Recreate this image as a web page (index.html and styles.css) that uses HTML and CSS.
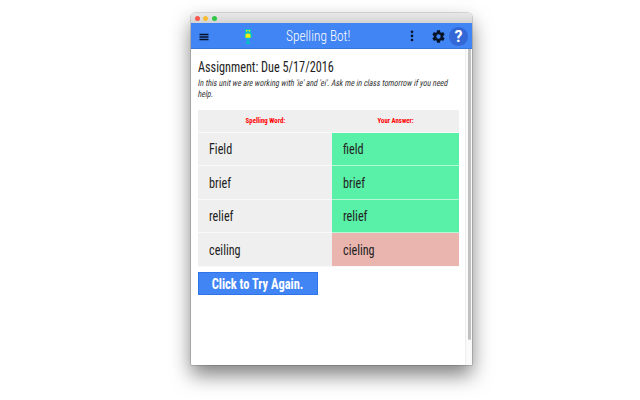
FILE: index.html
```html
<!DOCTYPE html>
<html lang="en">
<head>
<meta charset="utf-8">
<title>Spelling Bot!</title>
<link rel="stylesheet" href="styles.css">
</head>
<body>
<main class="window">
  <div class="titlebar"><i class="dot red"></i><i class="dot yellow"></i><i class="dot green"></i></div>
  <header class="toolbar">
    <svg class="menu" width="10" height="8" viewBox="0 0 10 8"><path d="M.5 1.5h9M.5 4h9M.5 6.5h9" stroke="#071326" stroke-width="1.3"/></svg>
    <svg class="bot" width="8" height="16" viewBox="0 0 8 16"><path fill="#05bfc8" d="M1 0h6v4h1v5H6v1H5v3h1v2H2v-2h1v-3H2V9H0.500V4H1z"/><path fill="#f6ee10" d="M2 1h1.400v1.500H2zM4.600 1H6v1.500H4.600zM2.500 4.500h3L6.500 6v2.800h-5V6z"/></svg>
    <h1 class="title"><span class="t">Spelling Bot!</span></h1>
    <svg class="more" width="4" height="12" viewBox="0 0 4 12"><g fill="#071326"><circle cx="2" cy="1.800" r="1.350"/><circle cx="2" cy="5.900" r="1.350"/><circle cx="2" cy="10" r="1.350"/></g></svg>
    <svg class="gear" width="15" height="15" viewBox="0 0 24 24"><path fill="#071326" d="M19.430 12.980c.04-.32.07-.64.07-.98s-.03-.66-.07-.98l2.110-1.650c.19-.15.24-.42.12-.64l-2-3.460c-.12-.22-.39-.3-.61-.22l-2.490 1c-.52-.4-1.080-.73-1.690-.98l-.38-2.650C14.460 2.180 14.250 2 14 2h-4c-.25 0-.46.18-.49.42l-.38 2.650c-.61.25-1.170.59-1.690.98l-2.490-1c-.23-.09-.49 0-.61.22l-2 3.460c-.13.22-.07.49.12.64l2.110 1.650c-.04.32-.07.65-.07.98s.03.66.07.98l-2.110 1.650c-.19.15-.24.42-.12.64l2 3.460c.12.22.39.3.61.22l2.490-1c.52.4 1.080.73 1.690.98l.38 2.650c.03.24.24.42.49.42h4c.25 0 .46-.18.49-.42l.38-2.650c.61-.25 1.170-.59 1.690-.98l2.490 1c.23.09.49 0 .61-.22l2-3.460c.12-.22.07-.49-.12-.64zM12 15.500a3.500 3.500 0 1 1 0-7 3.500 3.500 0 0 1 0 7z"/></svg>
    <span class="help">?</span>
  </header>
  <div class="body">
    <section class="content">
      <h2 class="assignment"><span class="t">Assignment: Due 5/17/2016</span></h2>
      <p class="note"><span class="t">In this unit we are working with 'ie' and 'ei'. Ask me in class tomorrow if you need</span><span class="t">help.</span></p>
      <div class="table">
        <div class="th"><span class="t">Spelling Word:</span></div><div class="th"><span class="t">Your Answer:</span></div>
        <div class="td"><span class="t">Field</span></div><div class="td right"><span class="t">field</span></div>
        <div class="td"><span class="t">brief</span></div><div class="td right"><span class="t">brief</span></div>
        <div class="td"><span class="t">relief</span></div><div class="td right"><span class="t">relief</span></div>
        <div class="td"><span class="t">ceiling</span></div><div class="td wrong"><span class="t">cieling</span></div>
      </div>
      <button class="again"><span class="t">Click to Try Again.</span></button>
    </section>
    <div class="track"><div class="thumb"></div></div>
  </div>
</main>
</body>
</html>
```
FILE: styles.css
```css
* { box-sizing: border-box; }
body { margin: 0; height: 400px; overflow: hidden; background: #fff; font-family: "Roboto Condensed", Roboto, sans-serif; font-stretch: 75%; color: #222; }
h1, h2, p { margin: 0; font-weight: 400; }
.t { display: inline-block; white-space: nowrap; transform-origin: left center; }
.window { width: 281px; height: 352px; margin: 13px 0 0 191px; display: flex; flex-direction: column; background: #fff; border-radius: 4px 4px 1px 1px; box-shadow: 0 0 0 .6px rgba(0,0,0,.25), 0 10px 20px rgba(0,0,0,.5); overflow: hidden; }
.titlebar { height: 10px; flex: none; display: flex; align-items: center; gap: 3.500px; padding-left: 3.500px; background: linear-gradient(#e8e8e8, #d4d4d4); }
.dot { width: 5px; height: 5px; border-radius: 50%; }
.red { background: #f9574f; }
.yellow { background: #f8bd34; }
.green { background: #31c748; }
.toolbar { height: 26px; flex: none; display: flex; align-items: center; background: #4184f3; border-bottom: 1px solid #3876dc; }
.toolbar svg { flex: none; }
.menu { margin: 2px 0 0 8px; }
.bot { margin: 2px 0 0 35px; }
.title { width: 66px; margin: 3px 0 0 34px; font-size: 14.500px; font-weight: 300; line-height: 20px; color: #fff; }
.title .t { transform: scaleX(.92); }
.more { margin: 1px 0 0 58px; }
.gear { margin: 1px 0 0 16.500px; }
.help { flex: none; width: 19px; height: 19px; margin: 1px 0 0 3.500px; border-radius: 50%; background: #3367d6; color: #fff; font: 700 16px/20px Roboto, sans-serif; text-align: center; }
.body { flex: 1; display: flex; min-height: 0; }
.content { flex: 1; padding: 10px 6px 0 7px; min-width: 0; }
.assignment { height: 17px; font-size: 14px; line-height: 17px; }
.assignment .t { transform: scaleX(.873); }
.note { height: 23px; margin-top: 2px; font-size: 9px; line-height: 11px; color: #333; }
.note .t { display: block; width: max-content; transform: scaleX(.877) skewX(-12deg); }
.table { width: 261px; margin-top: 9px; display: grid; grid-template-columns: 134px 127px; grid-template-rows: 22.500px repeat(4, 33.500px); }
.th, .td { background: #efefef; border-bottom: 1px solid #f9f9f9; display: flex; align-items: center; }
.th { justify-content: center; padding-top: 1px; color: #f00; font-size: 7px; font-weight: 700; }
.th .t { transform: scaleX(.97); transform-origin: center; }
.td { padding: 1px 0 0 11px; font-size: 14px; }
.td .t { transform: scaleX(.87); }
.right { background: #59f0a7; border-color: #b5f8d7; }
.wrong { background: #eab4af; }
.again { display: flex; align-items: center; justify-content: center; width: 120px; height: 23px; margin-top: 5.500px; padding: 0; border: 1px solid #2f74e8; background: #4184f3; color: #fff; font-family: inherit; font-size: 14px; font-weight: 700; font-stretch: 75%; }
.again .t { transform: scaleX(.89); transform-origin: center; }
.track { width: 7px; padding-left: 2px; background: #fafafa; border-left: 1px solid #eee; }
.thumb { width: 3px; height: 291px; border-radius: 0 0 2px 2px; background: #c1c1c1; }
```
